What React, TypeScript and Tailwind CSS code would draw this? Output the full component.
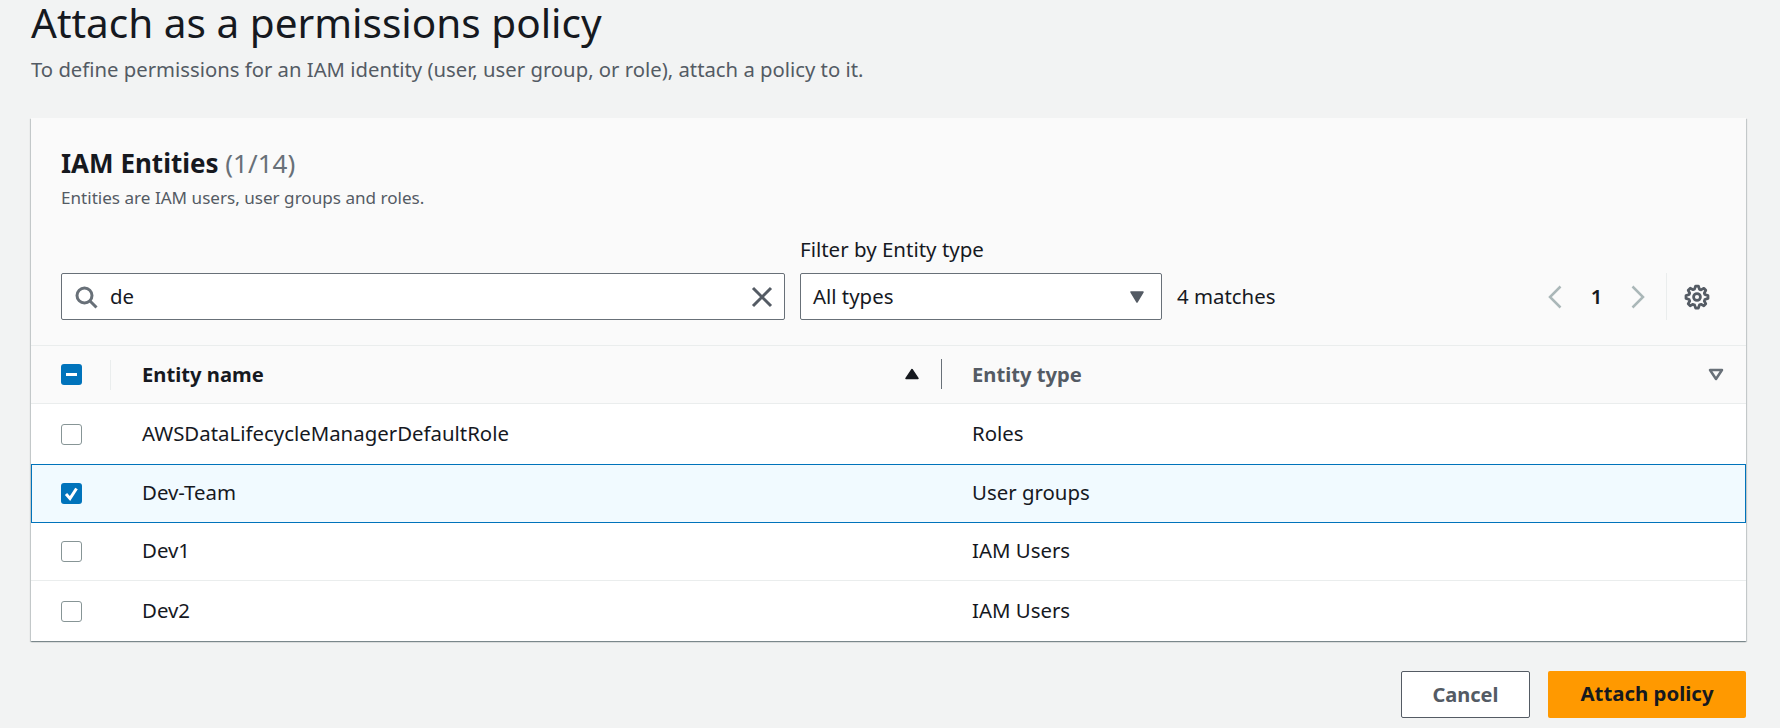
const font = "font-['Noto_Sans','Open_Sans',sans-serif]";

const rows = [
  { name: 'AWSDataLifecycleManagerDefaultRole', type: 'Roles', checked: false, height: 'h-[61px]' },
  { name: 'Dev-Team', type: 'User groups', checked: true, height: 'h-[59px]' },
  { name: 'Dev1', type: 'IAM Users', checked: false, height: 'h-[59px]' },
  { name: 'Dev2', type: 'IAM Users', checked: false, height: 'h-[60px]' },
];

function Checkbox({ state }: { state: 'off' | 'on' | 'mixed' }) {
  if (state === 'off') {
    return <div className="h-[21px] w-[21px] shrink-0 rounded-[3px] border-[1.5px] border-[#879596] bg-white" />;
  }
  return (
    <div className="flex h-[21px] w-[21px] shrink-0 items-center justify-center rounded-[3px] bg-[#0073bb]">
      <svg width="21" height="21" viewBox="0 0 21 21" fill="none" stroke="#fff" strokeWidth="3">
        {state === 'on' ? <path d="M5 11l4 4.5L15.5 5.5" /> : <path d="M5 10.5h11" />}
      </svg>
    </div>
  );
}

function Row({ name, type, checked, height }: { name: string; type: string; checked: boolean; height: string }) {
  return (
    <div
      className={
        checked
          ? `relative -my-px flex items-center bg-[#f1faff] shadow-[inset_0_0_0_1px_#0073bb] ${height}`
          : `flex items-center border-b border-[#eaeded] last:border-b-0 ${height}`
      }
    >
      <div className="flex w-[80px] shrink-0 pl-[30px]">
        <Checkbox state={checked ? 'on' : 'off'} />
      </div>
      <div className="w-[31px] shrink-0" />
      <div className="w-[830px] shrink-0 pb-[2px] text-[20.4px] text-[#16191f]">{name}</div>
      <div className="pb-[2px] text-[20.4px] text-[#16191f]">{type}</div>
    </div>
  );
}

export default function App() {
  return (
    <div className={`${font} h-[728px] w-[1780px] overflow-hidden bg-[#f2f3f3] pl-[31px] pr-[34px]`}>
      <h1 className="h-[46px] text-[40.5px] leading-[46px] font-normal text-[#16191f]">Attach as a permissions policy</h1>
      <p className="mt-[9px] text-[20.3px] leading-[28px] text-[#545b64]">
        To define permissions for an IAM identity (user, user group, or role), attach a policy to it.
      </p>

      <div className="mt-[35px] bg-white shadow-[0_1px_1px_0_rgba(0,28,36,0.3),1px_1px_1px_0_rgba(0,28,36,0.15),-1px_1px_1px_0_rgba(0,28,36,0.15)]">
        <div className="h-[228px] border-b border-[#eaeded] bg-[#fafafa] px-[30px] pt-[29px]">
          <h2 className="text-[26px] leading-[32px] font-bold text-[#16191f]">
            IAM Entities <span className="font-normal text-[#687078]">(1/14)</span>
          </h2>
          <p className="mt-[7px] text-[17.1px] leading-[24px] text-[#545b64]">Entities are IAM users, user groups and roles.</p>

          <div className="mt-[26px] flex items-end">
            <div className="flex h-[47px] w-[724px] shrink-0 items-center rounded-[2px] border border-[#687078] bg-white pr-[10px] pl-[12px]">
              <svg width="24" height="24" viewBox="0 0 16 16" fill="none" stroke="#687078" strokeWidth="2">
                <circle cx="7" cy="7" r="5" />
                <path d="M15 15l-4.5-4.5" />
              </svg>
              <span className="ml-[12px] flex-1 text-[20.4px] text-[#16191f]">de</span>
              <svg width="24" height="24" viewBox="0 0 16 16" fill="none" stroke="#545b64" strokeWidth="2">
                <path d="M2 2l12 12M14 2L2 14" />
              </svg>
            </div>

            <div className="ml-[15px] w-[362px] shrink-0">
              <div className="mb-[11px] text-[20.5px] leading-[26px] text-[#16191f]">Filter by Entity type</div>
              <div className="flex h-[47px] items-center justify-between rounded-[2px] border border-[#687078] bg-white pr-[16px] pl-[12px]">
                <span className="text-[20.4px] text-[#16191f]">All types</span>
                <svg width="16" height="14" viewBox="0 0 16 14" fill="#545b64" stroke="#545b64" strokeWidth="1.5" strokeLinejoin="round">
                  <path d="M2 2h12l-6 10z" />
                </svg>
              </div>
            </div>

            <div className="ml-[15px] flex h-[47px] items-center text-[20.4px] text-[#16191f]">4 matches</div>

            <div className="ml-auto flex h-[47px] items-center">
              <svg width="14" height="24" viewBox="0 0 14 24" fill="none" stroke="#aab7b8" strokeWidth="2.5">
                <path d="M12.5 1.5L2 12l10.5 10.5" />
              </svg>
              <span className="w-[69px] text-center text-[20.4px] font-semibold text-[#16191f]">1</span>
              <svg width="14" height="24" viewBox="0 0 14 24" fill="none" stroke="#aab7b8" strokeWidth="2.5">
                <path d="M1.5 1.5L12 12 1.5 22.5" />
              </svg>
              <div className="ml-[21px] h-[47px] w-px bg-[#eaeded]" />
              <svg className="mr-[8px] ml-[19px] overflow-visible" width="22" height="22" viewBox="0 0 16 16" fill="none" stroke="#545b64" strokeWidth="2" strokeLinejoin="round">
                <path d="M13.3 5.2l1.1-2.1L13 1.7l-2.1 1.1c-.3-.2-.7-.3-1.1-.4L9 0H7l-.8 2.3c-.3.1-.7.2-1 .4L3.1 1.6 1.6 3.1l1.1 2.1c-.2.3-.3.7-.4 1L0 7v2l2.3.8c.1.4.3.7.4 1.1l-1.1 2.1 1.4 1.4 2.1-1.1c.3.2.7.3 1.1.4L7 16h2l.8-2.3c.4-.1.7-.3 1.1-.4l2.1 1.1 1.4-1.4-1.1-2.1c.2-.3.3-.7.4-1.1L16 9V7l-2.3-.8c-.1-.3-.2-.7-.4-1z" />
                <circle cx="8" cy="8" r="2.5" />
              </svg>
            </div>
          </div>
        </div>

        <div className="flex h-[58px] items-center border-b border-[#eaeded] bg-[#fafafa]">
          <div className="flex h-[30px] w-[80px] shrink-0 items-center border-r border-[#eaeded] pl-[30px]">
            <Checkbox state="mixed" />
          </div>
          <div className="w-[31px] shrink-0" />
          <div className="flex w-[800px] shrink-0 items-center justify-between">
            <span className="text-[20.2px] font-bold text-[#16191f]">Entity name</span>
            <div className="flex h-[30px] items-center">
              <svg width="16" height="12" viewBox="0 0 16 12" fill="#16191f" stroke="#16191f" strokeWidth="1.5" strokeLinejoin="round">
                <path d="M8 1.5l6 9H2z" />
              </svg>
              <div className="ml-[21px] h-[30px] w-px bg-[#687078]" />
            </div>
          </div>
          <div className="flex flex-1 items-center justify-between pr-[22px] pl-[30px]">
            <span className="text-[20.2px] font-bold text-[#545b64]">Entity type</span>
            <svg width="16" height="13" viewBox="0 0 16 13" fill="none" stroke="#687078" strokeWidth="2.5" strokeLinejoin="round">
              <path d="M2 2h12L8 11z" />
            </svg>
          </div>
        </div>

        {rows.map((r) => (
          <Row key={r.name} {...r} />
        ))}
      </div>

      <div className="mt-[30px] flex justify-end gap-[18px]">
        <button className="h-[47px] w-[129px] rounded-[2px] border border-[#545b64] bg-white text-[20px] font-bold text-[#545b64]">Cancel</button>
        <button className="h-[47px] w-[198px] rounded-[2px] bg-[#ff9900] pb-[2px] text-[20.4px] font-bold text-[#16191f]">Attach policy</button>
      </div>
    </div>
  );
}
